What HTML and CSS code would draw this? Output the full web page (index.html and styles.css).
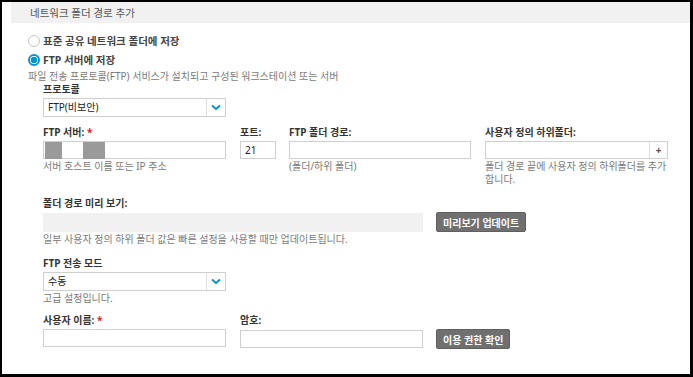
FILE: index.html
```html
<!DOCTYPE html>
<html lang="ko">
<head>
  <meta charset="UTF-8">
  <title>네트워크 폴더 경로 추가</title>
  <link rel="stylesheet" href="styles.css">
</head>
<body>
  <div class="frame">
    <div class="section-head">네트워크 폴더 경로 추가</div>

    <div class="content">
      <label class="radio-row">
        <span class="radio"></span>
        <span>표준 공유 네트워크 폴더에 저장</span>
      </label>
      <label class="radio-row">
        <span class="radio checked"></span>
        <span>FTP 서버에 저장</span>
      </label>
      <div class="hint">파일 전송 프로토콜(FTP) 서비스가 설치되고 구성된 워크스테이션 또는 서버</div>

      <div class="fields">
        <div class="label">프로토콜</div>
        <div class="select w-wide">
          <span class="select-value">FTP(비보안)</span>
          <span class="select-arrow">
            <svg width="10" height="7" viewBox="0 0 10 7"><polyline points="1,1.5 5,5 9,1.5" fill="none" stroke="#0096d6" stroke-width="2"/></svg>
          </span>
        </div>

        <div class="field-row">
          <div class="field w-wide">
            <div class="label">FTP 서버: <span class="req">*</span></div>
            <div class="input">
              <span class="mask mask-a"></span>
              <span class="mask mask-b"></span>
            </div>
            <div class="hint">서버 호스트 이름 또는 IP 주소</div>
          </div>
          <div class="field w-port">
            <div class="label">포트:</div>
            <div class="input"><span class="input-value">21</span></div>
          </div>
          <div class="field w-path">
            <div class="label">FTP 폴더 경로:</div>
            <div class="input"></div>
            <div class="hint">(폴더/하위 폴더)</div>
          </div>
          <div class="field w-wide">
            <div class="label">사용자 정의 하위폴더:</div>
            <div class="input input-add"><span class="add-btn">+</span></div>
            <div class="hint">폴더 경로 끝에 사용자 정의 하위폴더를 추가합니다.</div>
          </div>
        </div>

        <div class="label gap-top">폴더 경로 미리 보기:</div>
        <div class="inline-row">
          <div class="preview"></div>
          <button class="btn">미리보기 업데이트</button>
        </div>
        <div class="hint">일부 사용자 정의 하위 폴더 값은 빠른 설정을 사용할 때만 업데이트됩니다.</div>

        <div class="label gap-top">FTP 전송 모드</div>
        <div class="select w-wide">
          <span class="select-value">수동</span>
          <span class="select-arrow">
            <svg width="10" height="7" viewBox="0 0 10 7"><polyline points="1,1.5 5,5 9,1.5" fill="none" stroke="#0096d6" stroke-width="2"/></svg>
          </span>
        </div>
        <div class="hint">고급 설정입니다.</div>

        <div class="field-row login-row">
          <div class="field w-wide">
            <div class="label">사용자 이름: <span class="req">*</span></div>
            <div class="input"></div>
          </div>
          <div class="field w-wide">
            <div class="label">암호:</div>
            <div class="input-line">
              <div class="input w-wide"></div>
              <button class="btn">이용 권한 확인</button>
            </div>
          </div>
        </div>
      </div>
    </div>
  </div>
</body>
</html>
```

FILE: styles.css
```css
* {
  box-sizing: border-box;
}

body {
  margin: 0;
  background-color: #000;
  font-family: "Noto Sans", "Noto Sans CJK KR", sans-serif;
  font-size: 10px;
  color: #333;
}

.frame {
  margin: 2px 3px 3px 2px;
  height: 372px;
  background-color: #fff;
  padding-left: 9px;
}

.section-head {
  height: 21px;
  line-height: 22px;
  padding-left: 19px;
  background-color: #f1f1f1;
  color: #555;
  font-size: 10.5px;
}

.content {
  padding: 8px 0 0 17px;
}

.radio-row {
  display: flex;
  align-items: center;
  gap: 3px;
  height: 19px;
  font-weight: bold;
  font-size: 10.5px;
  color: #444;
}

.radio {
  width: 12px;
  height: 12px;
  border: 1px solid #c4c4c4;
  border-radius: 50%;
  background: #fff;
}

.radio.checked {
  border: 2px solid #0096d6;
  background: radial-gradient(circle, #0096d6 0 3px, #fff 3.5px);
}

.hint {
  line-height: 13px;
  color: #7a7a7a;
  margin-top: 1px;
}

.fields {
  padding-left: 15px;
}

.label {
  font-weight: bold;
  line-height: 13px;
  color: #333;
  margin-bottom: 2px;
}

.req {
  color: #e0202b;
}

.w-wide {
  width: 183px;
}

.w-port {
  width: 36px;
}

.w-path {
  width: 182px;
}

.select {
  display: flex;
  height: 19px;
  border: 1px solid #cfcfcf;
  background: #fff;
}

.select-value {
  flex: 1;
  padding-left: 4px;
  line-height: 17px;
  color: #222;
}

.select-arrow {
  width: 19px;
  border-left: 1px solid #dedede;
  display: flex;
  align-items: center;
  justify-content: center;
}

.field-row {
  display: flex;
  gap: 14px;
  margin-top: 9px;
}

.field-row .w-path {
  margin-left: -1px;
}

.login-row {
  margin-top: 9px;
}

.input {
  height: 18px;
  border: 1px solid #cfcfcf;
  background: #fff;
  display: flex;
  align-items: stretch;
}

.input-value {
  padding-left: 4px;
  line-height: 16px;
  color: #222;
}

.mask {
  background: #9a9a9a;
  height: 17px;
}

.mask-a {
  width: 17px;
  margin-left: 1px;
}

.mask-b {
  width: 22px;
  margin-left: 21px;
}

.input-add {
  justify-content: flex-end;
}

.add-btn {
  width: 18px;
  border-left: 1px solid #dedede;
  text-align: center;
  line-height: 16px;
  font-weight: bold;
  color: #555;
}

.gap-top {
  margin-top: 11px;
}

.inline-row,
.input-line {
  display: flex;
  align-items: center;
  gap: 13px;
}

.preview {
  width: 380px;
  height: 19px;
  background-color: #f1f1f1;
}

.btn {
  height: 20px;
  padding: 0 6px;
  border: 1px solid #5f5f5f;
  border-radius: 2px;
  background-color: #707070;
  color: #fff;
  font-family: inherit;
  font-size: 10px;
  font-weight: bold;
  white-space: nowrap;
}

.input-line .input {
  flex: none;
}
```
